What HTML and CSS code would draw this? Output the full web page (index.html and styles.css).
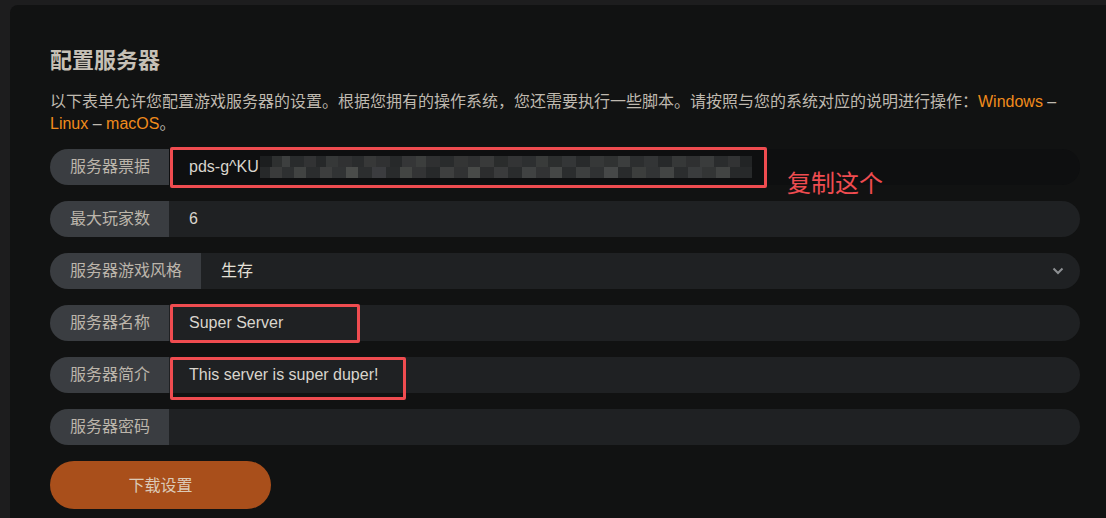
FILE: index.html
```html
<!DOCTYPE html>
<html lang="zh-CN">
<head>
<meta charset="utf-8">
<title>配置服务器</title>
<link rel="stylesheet" href="styles.css">
</head>
<body>
<div class="page">
  <section class="panel">
    <h1 class="title">配置服务器</h1>
    <p class="desc">以下表单允许您配置游戏服务器的设置。根据您拥有的操作系统，您还需要执行一些脚本。请按照与您的系统对应的说明进行操作：<a class="link">Windows</a> – <a class="link">Linux</a> – <a class="link">macOS</a>。</p>

    <div class="form">
      <div class="row">
        <span class="label">服务器票据</span>
        <span class="input input-dark">pds-g^KU<span class="blur"></span></span>
        <span class="mark mark-1"></span>
        <span class="note">复制这个</span>
      </div>
      <div class="row">
        <span class="label">最大玩家数</span>
        <span class="input">6</span>
      </div>
      <div class="row">
        <span class="label">服务器游戏风格</span>
        <span class="input select"><span class="select-value">生存</span>
          <svg class="chevron" width="12" height="8" viewBox="0 0 12 8"><path d="M1.5 1.5 L6 6 L10.5 1.5" fill="none" stroke="#8d9093" stroke-width="2"/></svg>
        </span>
      </div>
      <div class="row">
        <span class="label">服务器名称</span>
        <span class="input">Super Server</span>
        <span class="mark mark-2"></span>
      </div>
      <div class="row">
        <span class="label">服务器简介</span>
        <span class="input">This server is super duper!</span>
        <span class="mark mark-3"></span>
      </div>
      <div class="row">
        <span class="label">服务器密码</span>
        <span class="input"></span>
      </div>
      <button class="btn">下载设置</button>
    </div>
  </section>
</div>
</body>
</html>
```

FILE: styles.css
```css
html, body {
  margin: 0;
  padding: 0;
  background: #1d1d1e;
  overflow: hidden;
  font-family: "Liberation Sans", "Noto Sans CJK SC", sans-serif;
}

.page {
  padding: 5px 0 0 10px;
  height: 518px;
  box-sizing: border-box;
}

.panel {
  background: #111212;
  border-radius: 8px 0 0 0;
  padding: 41px 0 0 40px;
  height: 513px;
  box-sizing: border-box;
  overflow: hidden;
}

.title {
  margin: 0;
  font-size: 22px;
  line-height: 30px;
  font-weight: bold;
  color: #c6c0b6;
}

.desc {
  width: 1030px;
  margin: 15px 0 0 0;
  font-size: 16px;
  line-height: 22px;
  color: #bfb9af;
}

.link {
  color: #f08b1c;
}

.form {
  width: 1030px;
  margin-top: 14px;
  display: flex;
  flex-direction: column;
  gap: 16px;
}

.row {
  position: relative;
  display: flex;
  height: 36px;
}

.label {
  background: #3a3d41;
  color: #bcb5ab;
  font-size: 16px;
  line-height: 36px;
  padding: 0 19px 0 20px;
  border-radius: 18px 0 0 18px;
  white-space: nowrap;
}

.input {
  flex: 1;
  background: #1f2123;
  color: #d9d5cd;
  font-size: 16px;
  line-height: 36px;
  padding-left: 20px;
  border-radius: 0 18px 18px 0;
  display: flex;
  align-items: center;
}

.input-dark {
  background: #0e0f10;
}

.blur {
  display: inline-block;
  width: 492px;
  height: 22px;
  margin-left: 1px;
  background:
    linear-gradient(90deg, #1c1e1f 0 12px, #2e3030 12px 22px, #3d3f3f 22px 30px, #292b2c 30px 44px, #323334 44px 56px, #262829 56px 66px, #363838 66px 78px, #303132 78px 92px, #2a2c2d 92px 104px, #373838 104px 116px, #303132 116px 130px, #27292a 130px 142px, #353637 142px 156px, #3c3e3d 156px 166px, #2f3031 166px 180px, #292b2c 180px 194px, #343535 194px 208px, #2f3031 208px 220px, #393a3a 220px 234px, #2a2c2c 234px 248px, #333435 248px 262px, #2d2f30 262px 276px, #393b3a 276px 288px, #2c2e2e 288px 302px, #343637 302px 316px, #282a2b 316px 330px, #363838 330px 344px, #303232 344px 358px, #3c3e3e 358px 370px, #2c2e2f 370px 384px, #333536 384px 398px, #27292a 398px 412px, #363838 412px 426px, #2f3031 426px 440px, #3a3c3c 440px 454px, #2a2c2d 454px 468px, #323334 468px 480px, #222425 480px 492px) 0 0 / 100% 11px no-repeat,
    linear-gradient(90deg, #27292a 0 10px, #3a3b3b 10px 22px, #2e3031 22px 34px, #414342 34px 46px, #2b2d2e 46px 60px, #3d3e3e 60px 72px, #313334 72px 86px, #4a4c4a 86px 98px, #2c2e2f 98px 112px, #3b3c3f 112px 126px, #292b2c 126px 140px, #434543 140px 152px, #333435 152px 166px, #27292a 166px 180px, #3e3f3f 180px 194px, #313233 194px 208px, #484a48 208px 220px, #2c2d2e 220px 234px, #3a3b3c 234px 248px, #2a2c2d 248px 262px, #404242 262px 276px, #323334 276px 290px, #454746 290px 302px, #2b2d2e 302px 316px, #3d3f3f 316px 330px, #303233 330px 344px, #464848 344px 358px, #292b2c 358px 372px, #3c3e3d 372px 386px, #323435 386px 400px, #434544 400px 414px, #2b2d2e 414px 428px, #3a3c3d 428px 442px, #333535 442px 456px, #424443 456px 470px, #27292a 470px 492px) 0 11px / 100% 11px no-repeat;
}

.select {
  justify-content: space-between;
  padding-right: 16px;
}

.select-value {
  color: #e4e0d8;
}

.chevron {
  display: block;
}

.mark {
  position: absolute;
  border: 3px solid #ef4c50;
  border-radius: 2px;
  box-sizing: border-box;
  pointer-events: none;
}

.mark-1 {
  left: 120px;
  top: -2px;
  width: 597px;
  height: 41px;
}

.mark-2 {
  left: 120px;
  top: -1px;
  width: 190px;
  height: 39px;
}

.mark-3 {
  left: 120px;
  top: 0;
  width: 236px;
  height: 43px;
}

.note {
  position: absolute;
  left: 737px;
  top: 19px;
  font-size: 24px;
  line-height: 28px;
  color: #ef4c50;
  font-family: "Noto Sans CJK SC", sans-serif;
}

.btn {
  width: 221px;
  height: 48px;
  border: none;
  border-radius: 24px;
  background: #a94f1b;
  color: #dccab7;
  font-family: "Liberation Sans", "Noto Sans CJK SC", sans-serif;
  font-size: 16px;
  padding: 0 0 3px 0;
}
```
